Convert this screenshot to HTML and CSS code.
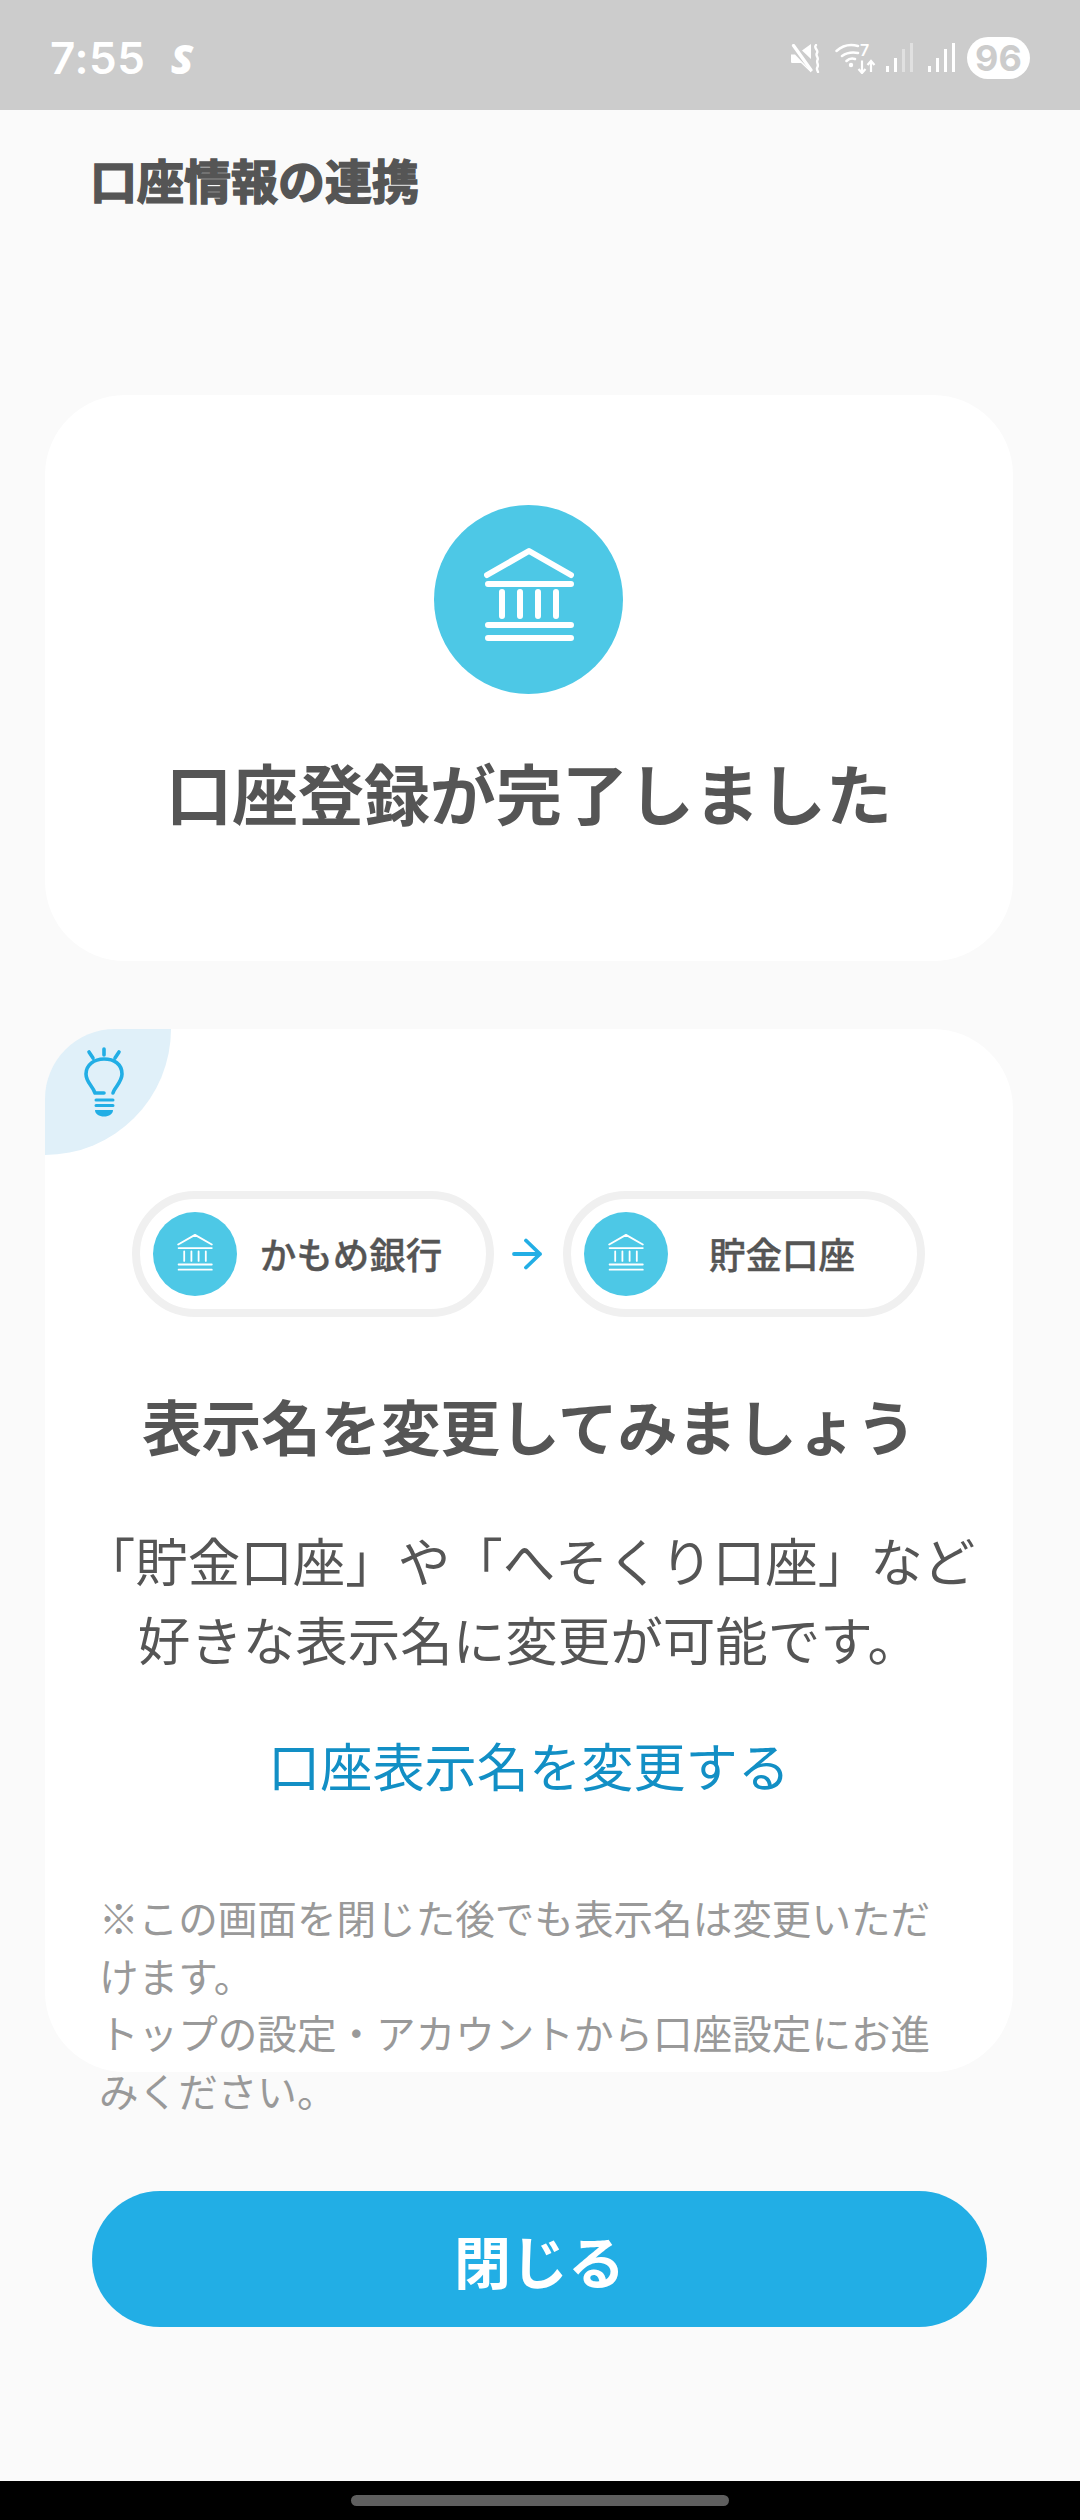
FILE: index.html
```html
<!DOCTYPE html>
<html lang="ja">
<head>
<meta charset="utf-8">
<link rel="stylesheet" href="styles.css">
</head>
<body>
<svg class="defs" width="0" height="0" aria-hidden="true">
  <symbol id="bank" viewBox="0 -4 90 112">
    <path d="M3 27 45 3 87 27M4 36H87M18 44V68M36 44V68M54 44V68M72 44V68M4 77H87M4 90H87" fill="none" stroke="#fff" stroke-linecap="round" stroke-linejoin="round"/>
  </symbol>
</svg>
<div class="page">
  <div class="status">
    <div class="status-left">
      <span class="time">7:55</span>
      <span class="s-mark">S</span>
    </div>
    <div class="status-right">
      <svg class="ico-mute" width="29" height="29" viewBox="0 0 29 29">
        <path d="M11 6.500 20 0V15ZM0 10.500H4L20 27V28.500L10 19H1.500C.5 19 0 18.500 0 17.500Z" fill="#fff"/>
        <path d="M2.500 1.500 20 26" stroke="#fff" stroke-width="3.200" stroke-linecap="round"/>
        <path d="M25 1C22 4 28 6 26 9 24 12 28 13 26.500 16 25 19 28 20 26.500 23 25 25 26.500 26 27 28" fill="none" stroke="#fff" stroke-width="2.400" stroke-linecap="round"/>
      </svg>
      <svg class="ico-wifi" width="42" height="31" viewBox="0 0 42 31">
        <path d="M1.500 8C8 2 16 1 23 3M7 13C12 9.500 18 9 23 10M11.500 18C13.500 16 17 15 20 16" fill="none" stroke="#fff" stroke-width="2.500" stroke-linecap="round"/>
        <circle cx="16" cy="22" r="2.200" fill="#fff"/>
        <text x="25" y="12.500" class="wifi-seven">7</text>
        <path d="M27 17.500V30M23.500 26 27 30 30.500 26M36 29V18M32.500 22 36 18 39.500 22" fill="none" stroke="#fff" stroke-width="2.200"/>
      </svg>
      <svg class="ico-signal" width="27" height="30" viewBox="0 0 27 30">
        <rect x="0" y="23" width="3" height="6" fill="#fff"/>
        <rect x="8" y="15" width="3" height="14" fill="#fff"/>
        <rect x="16" y="6" width="3" height="23" fill="#e0e0e0"/>
        <rect x="24" y="0" width="3" height="29" fill="#e0e0e0"/>
      </svg>
      <svg class="ico-signal" width="27" height="30" viewBox="0 0 27 30">
        <rect x="0" y="23" width="3" height="6" fill="#fff"/>
        <rect x="8" y="15" width="3" height="14" fill="#fff"/>
        <rect x="16" y="6" width="3" height="23" fill="#fff"/>
        <rect x="24" y="0" width="3" height="29" fill="#fff"/>
      </svg>
      <span class="battery">96</span>
    </div>
  </div>

  <main class="content">
    <h1 class="page-title">口座情報の連携</h1>

    <section class="card card-done">
      <div class="big-circle">
        <svg class="bank-big"><use href="#bank"/></svg>
      </div>
      <h2 class="done-title">口座登録が完了しました</h2>
    </section>

    <section class="card card-tip">
      <div class="corner">
        <svg width="40" height="70" viewBox="0 0 40 70">
          <path d="M5 5 9 11M20 2V8M35 5 31 11M29 46C30 41 38 35 38 27 38 17 30 12 20 12 10 12 2 18 2 27 2 35 8 38 11 46H20" fill="none" stroke="#22aee5" stroke-width="3.600" stroke-linecap="round" stroke-linejoin="round"/>
          <path d="M12 53H29M12 58.500H29" stroke="#22aee5" stroke-width="3" stroke-linecap="round"/>
          <path d="M11 63H29C29 67 25 69.500 20 69.500 15 69.500 11 67 11 63Z" fill="#22aee5"/>
        </svg>
      </div>

      <div class="pills">
        <div class="pill">
          <span class="small-circle"><svg class="bank-small"><use href="#bank"/></svg></span>
          <span class="pill-label">かもめ銀行</span>
        </div>
        <svg class="arrow" width="69" height="32" viewBox="0 0 69 32">
          <path d="M20 16H46M32 2.500 46 16 32 29.500" fill="none" stroke="#22aee5" stroke-width="3.800" stroke-linecap="round" stroke-linejoin="round"/>
        </svg>
        <div class="pill">
          <span class="small-circle"><svg class="bank-small"><use href="#bank"/></svg></span>
          <span class="pill-label">貯金口座</span>
        </div>
      </div>

      <h2 class="tip-title">表示名を変更してみましょう</h2>
      <p class="tip-body">「貯金口座」や「へそくり口座」など<br>好きな表示名に変更が可能です。</p>
      <a class="tip-link">口座表示名を変更する</a>
      <p class="tip-note">※この画面を閉じた後でも表示名は変更いただけます。<br>トップの設定・アカウントから口座設定にお進みください。</p>
    </section>

    <button class="close-btn">閉じる</button>
  </main>

  <div class="navbar"><span class="nav-handle"></span></div>
</div>
</body>
</html>
```
FILE: styles.css
```css
* { box-sizing: border-box; }
html, body { margin: 0; padding: 0; }
body {
  width: 1080px;
  height: 2520px;
  overflow: hidden;
  background: #fafafa;
  font-family: "Noto Sans CJK JP", "Noto Sans", sans-serif;
  color: #555;
}
.defs { position: absolute; }
.page { display: flex; flex-direction: column; height: 2520px; }

.status {
  height: 110px;
  flex: none;
  background: #ccc;
  display: flex;
  align-items: center;
  justify-content: space-between;
  padding: 6px 50px 0 50px;
  color: #fff;
}
.status-left { display: flex; align-items: center; gap: 25px; }
.time { font-family: Inter, sans-serif; font-weight: 600; font-size: 44px; line-height: 50px; letter-spacing: 0.6px; }
.s-mark { font-family: "Open Sans", sans-serif; font-weight: 800; font-style: italic; font-size: 41px; line-height: 50px; }
.status-right { display: flex; align-items: center; }
.ico-mute { margin-right: 15px; }
.ico-wifi { margin-right: 9px; }
.ico-signal { margin-right: 15px; }
.ico-signal:nth-of-type(4) { margin-right: 12px; }
.wifi-seven { font-family: Inter, sans-serif; font-size: 16px; font-weight: 600; fill: #fff; }
.battery {
  width: 63px;
  height: 42px;
  border-radius: 21px;
  background: #fff;
  color: #ccc;
  font-family: Inter, sans-serif;
  font-weight: 700;
  font-size: 36px;
  line-height: 42px;
  text-align: center;
}

.content { flex: 1; display: flex; flex-direction: column; }
.page-title {
  margin: 0;
  height: 285px;
  padding: 39px 0 0 90px;
  font-size: 47px;
  line-height: 60px;
  font-weight: 700;
  color: #555;
  -webkit-text-stroke: 1.5px #555;
}

.card {
  width: 968px;
  margin-left: 45px;
  background: #fff;
  border-radius: 80px;
  flex: none;
}
.card-done {
  height: 566px;
  padding-top: 110px;
  display: flex;
  flex-direction: column;
  align-items: center;
}
.big-circle {
  width: 189px;
  height: 189px;
  border-radius: 50%;
  background: #4dc8e6;
  display: flex;
  align-items: center;
  justify-content: center;
  flex: none;
  margin-right: 1px;
}
.bank-big { width: 90px; height: 112px; stroke-width: 6px; }
.done-title {
  margin: 52px 0 0;
  font-size: 66px;
  line-height: 90px;
  font-weight: 700;
  color: #555;
}

.card-tip {
  position: relative;
  height: 1043px;
  margin-top: 68px;
  padding-top: 162px;
  display: flex;
  flex-direction: column;
  align-items: center;
  text-align: center;
}
.corner {
  position: absolute;
  left: 0;
  top: 0;
  width: 126px;
  height: 126px;
  background: #e0f0f9;
  border-radius: 70px 0 126px 0;
  padding: 18px 0 0 39px;
}
.corner svg { display: block; }

.pills { display: flex; align-items: center; margin-right: 1px; }
.pill {
  width: 362px;
  height: 126px;
  border: 8px solid #f0f0f0;
  border-radius: 63px;
  background: #fff;
  display: flex;
  align-items: center;
  padding: 0 21px 0 13px;
}
.small-circle {
  width: 84px;
  height: 84px;
  border-radius: 50%;
  background: #4dc8e6;
  display: flex;
  align-items: center;
  justify-content: center;
  flex: none;
}
.bank-small { width: 36px; height: 45px; stroke-width: 4.5px; }
.pill-label {
  flex: 1;
  text-align: center;
  font-size: 36.500px;
  line-height: 50px;
  font-weight: 500;
  color: #555;
  -webkit-text-stroke: 0.4px #555;
}
.arrow { flex: none; }

.tip-title {
  margin: 68px 0 0;
  font-size: 59.700px;
  line-height: 80px;
  font-weight: 700;
  color: #555;
}
.tip-body {
  margin: 55px 0 0;
  font-size: 52.500px;
  line-height: 79px;
  font-weight: 400;
  color: #555;
  white-space: nowrap;
}
.tip-link {
  display: block;
  margin-top: 51px;
  font-size: 52.200px;
  line-height: 70px;
  color: #128fc5;
}
.tip-note {
  margin: 89px 0 0;
  align-self: flex-start;
  margin-left: 54px;
  width: 842px;
  text-align: left;
  font-size: 39.600px;
  line-height: 57.500px;
  color: #999;
}

.close-btn {
  display: block;
  flex: none;
  width: 895px;
  height: 136px;
  margin: 119px 0 0 92px;
  border: 0;
  border-radius: 68px;
  background: #22aee5;
  color: #fff;
  font-family: inherit;
  font-size: 57px;
  font-weight: 700;
  padding: 0;
}

.navbar {
  height: 39px;
  flex: none;
  background: #000;
  display: flex;
  justify-content: center;
  padding-top: 14px;
}
.nav-handle {
  width: 378px;
  height: 11px;
  border-radius: 6px;
  background: #5f5f5f;
}
```
